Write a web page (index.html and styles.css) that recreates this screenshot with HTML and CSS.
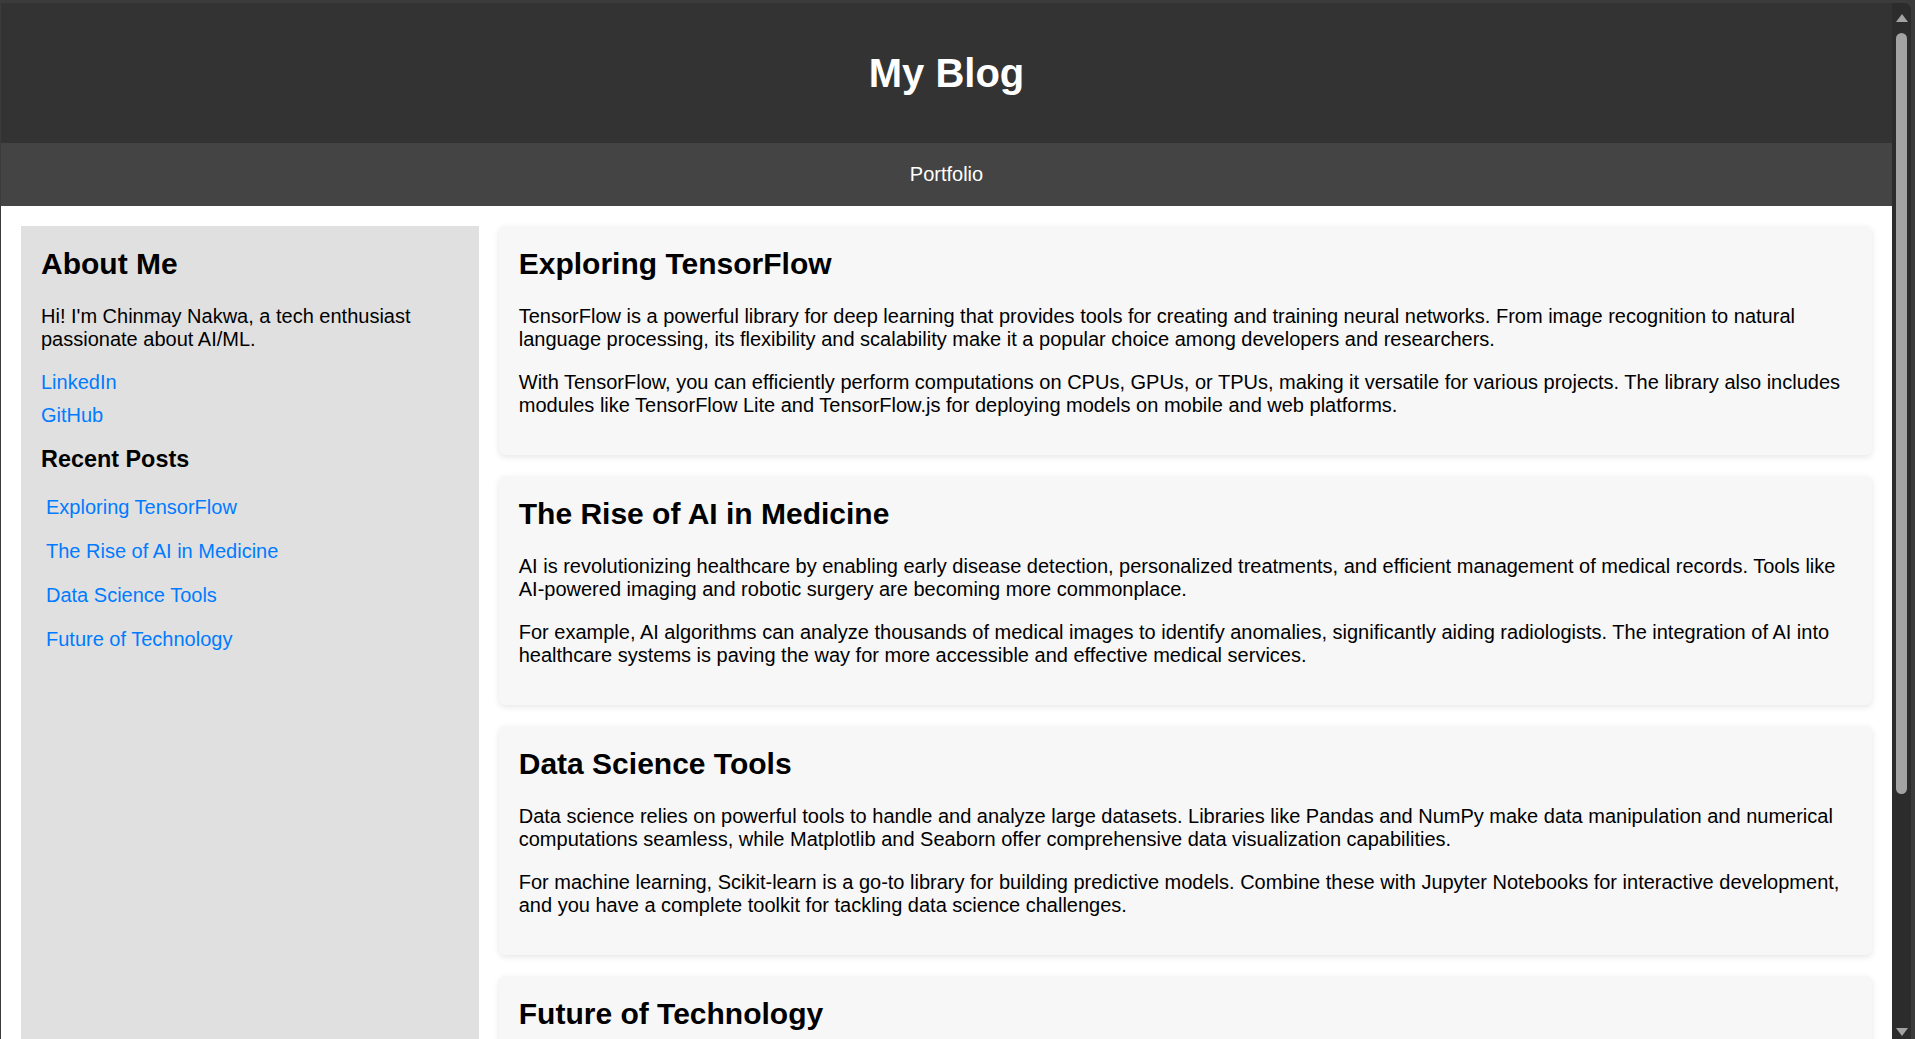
FILE: index.html
```html
<!DOCTYPE html>
<html lang="en">
<head>
<meta charset="utf-8">
<title>My Blog</title>
<link rel="stylesheet" href="styles.css">
</head>
<body>
<div class="window">
  <div class="viewport">
    <header class="site-header">
      <h1 class="site-title">My Blog</h1>
    </header>
    <nav class="site-nav">
      <a class="nav-link" href="#">Portfolio</a>
    </nav>
    <main class="layout">
      <aside class="sidebar">
        <h2 class="sidebar-title">About Me</h2>
        <p class="about-text">Hi! I'm Chinmay Nakwa, a tech enthusiast passionate about AI/ML.</p>
        <ul class="social-list">
          <li class="social-item"><a class="link" href="#">LinkedIn</a></li>
          <li class="social-item"><a class="link" href="#">GitHub</a></li>
        </ul>
        <h3 class="recent-title">Recent Posts</h3>
        <ul class="recent-list">
          <li class="recent-item"><a class="link" href="#">Exploring TensorFlow</a></li>
          <li class="recent-item"><a class="link" href="#">The Rise of AI in Medicine</a></li>
          <li class="recent-item"><a class="link" href="#">Data Science Tools</a></li>
          <li class="recent-item"><a class="link" href="#">Future of Technology</a></li>
        </ul>
      </aside>
      <section class="posts">
        <article class="post">
          <h2 class="post-title">Exploring TensorFlow</h2>
          <p class="post-text">TensorFlow is a powerful library for deep learning that provides tools for creating and training neural networks. From image recognition to natural language processing, its flexibility and scalability make it a popular choice among developers and researchers.</p>
          <p class="post-text">With TensorFlow, you can efficiently perform computations on CPUs, GPUs, or TPUs, making it versatile for various projects. The library also includes modules like TensorFlow Lite and TensorFlow.js for deploying models on mobile and web platforms.</p>
        </article>
        <article class="post">
          <h2 class="post-title">The Rise of AI in Medicine</h2>
          <p class="post-text">AI is revolutionizing healthcare by enabling early disease detection, personalized treatments, and efficient management of medical records. Tools like AI-powered imaging and robotic surgery are becoming more commonplace.</p>
          <p class="post-text">For example, AI algorithms can analyze thousands of medical images to identify anomalies, significantly aiding radiologists. The integration of AI into healthcare systems is paving the way for more accessible and effective medical services.</p>
        </article>
        <article class="post">
          <h2 class="post-title">Data Science Tools</h2>
          <p class="post-text">Data science relies on powerful tools to handle and analyze large datasets. Libraries like Pandas and NumPy make data manipulation and numerical computations seamless, while Matplotlib and Seaborn offer comprehensive data visualization capabilities.</p>
          <p class="post-text">For machine learning, Scikit-learn is a go-to library for building predictive models. Combine these with Jupyter Notebooks for interactive development, and you have a complete toolkit for tackling data science challenges.</p>
        </article>
        <article class="post">
          <h2 class="post-title">Future of Technology</h2>
          <p class="post-text">Emerging technologies such as quantum computing, edge AI, and advanced robotics are set to reshape industries and everyday life.</p>
          <p class="post-text">Staying curious and continuously learning is the best way to keep up with the rapid pace of innovation.</p>
        </article>
      </section>
    </main>
  </div>
  <div class="scrollbar">
    <span class="scroll-arrow scroll-arrow-up"></span>
    <span class="scroll-thumb"></span>
    <span class="scroll-spacer"></span>
    <span class="scroll-arrow scroll-arrow-down"></span>
  </div>
</div>
</body>
</html>
```

FILE: styles.css
```css
* {
  box-sizing: border-box;
}

html, body {
  margin: 0;
  padding: 0;
  height: 100%;
  overflow: hidden;
  background: #3b3b3b;
}

body {
  font-family: "Liberation Sans", Arial, sans-serif;
  font-size: 20px;
  color: #000;
}

.window {
  width: 1915px;
  height: 1039px;
  display: flex;
  padding: 3px 4px 0 1px;
  background: #3b3b3b;
  overflow: hidden;
}

.viewport {
  flex: 1;
  min-width: 0;
  background: #fff;
  overflow: hidden;
}

.site-header {
  background: #333;
  color: #fff;
  text-align: center;
  padding: 20px;
}

.site-title {
  margin: 27px 0;
  font-size: 40px;
  line-height: 46px;
  font-weight: bold;
}

.site-nav {
  background: #444;
  text-align: center;
  padding: 20px;
  line-height: 23px;
}

.nav-link {
  color: #fff;
  text-decoration: none;
}

.layout {
  display: grid;
  grid-template-columns: 1fr 3fr;
  gap: 20px;
  padding: 20px;
  align-items: stretch;
}

.sidebar {
  min-width: 0;
  background: #e0e0e0;
  padding: 20px;
  min-height: 900px;
}

.sidebar-title,
.post-title {
  margin: 0 0 24px;
  font-size: 30px;
  line-height: 35px;
  font-weight: bold;
}

.about-text,
.post-text {
  margin: 0 0 20px;
  line-height: 23px;
}

.social-list,
.recent-list {
  list-style: none;
  margin: 0;
  padding: 0;
}

.social-item {
  line-height: 23px;
  margin-bottom: 10px;
}

.recent-title {
  margin: 19px 0 18px;
  font-size: 23.4px;
  line-height: 27px;
  font-weight: bold;
}

.recent-item {
  padding: 5px;
  line-height: 23px;
  margin-bottom: 11px;
}

.link {
  color: #007bff;
  text-decoration: none;
}

.posts {
  min-width: 0;
}

.post {
  background: #f7f7f7;
  padding: 20px 20px 1px;
  margin-bottom: 21px;
  border-radius: 6px;
  box-shadow: 0 2px 6px rgba(0, 0, 0, 0.1);
}

.post-text:last-child {
  margin-bottom: 37px;
}

.scrollbar {
  width: 19px;
  flex: none;
  background: #2c2c2c;
  border-top-right-radius: 7px;
  display: flex;
  flex-direction: column;
  align-items: center;
  padding: 11px 0 3px;
}

.scroll-arrow {
  display: block;
  width: 0;
  height: 0;
  border-left: 6px solid transparent;
  border-right: 6px solid transparent;
}

.scroll-arrow-up {
  border-bottom: 8px solid #a3a3a3;
}

.scroll-arrow-down {
  border-top: 8px solid #a3a3a3;
}

.scroll-thumb {
  display: block;
  width: 11px;
  height: 761px;
  margin-top: 11px;
  background: #a3a3a3;
  border-radius: 6px;
}

.scroll-spacer {
  flex: 1;
}
```
